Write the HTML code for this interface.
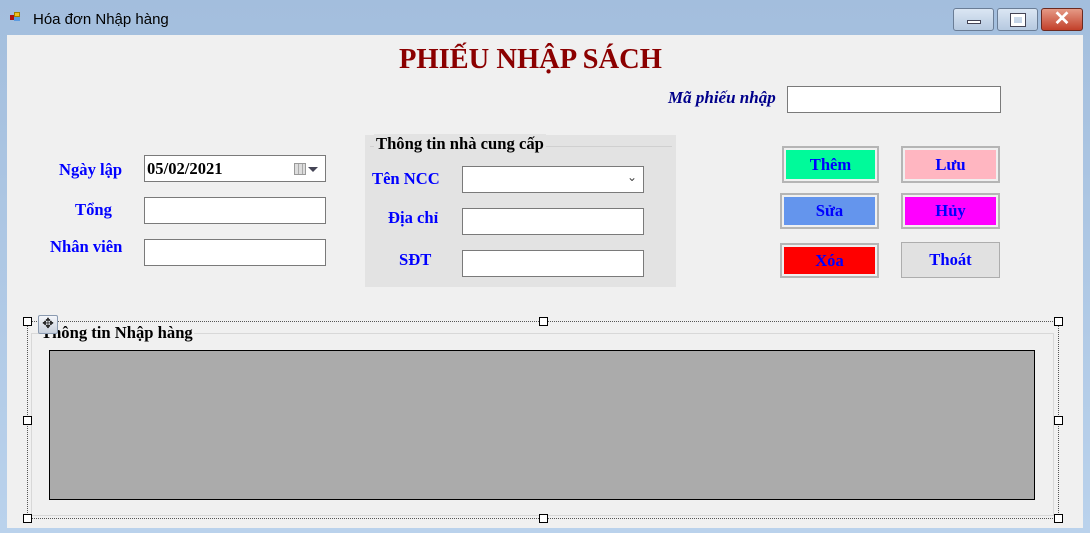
<!DOCTYPE html>
<html><head><meta charset="utf-8"><style>
*{margin:0;padding:0;box-sizing:border-box}
body{width:1090px;height:533px;overflow:hidden;background:linear-gradient(#a3bedd,#bad2ec);font-family:"Liberation Serif",serif;position:relative}
.a{position:absolute}
.lbl{position:absolute;font-weight:bold;font-size:16.6px;color:#0000ff;white-space:nowrap}
.in{position:absolute;background:#fff;border:1px solid #7a7a7a}
.btn{position:absolute;border:2px solid #b5b5b5;padding:2px}
.btn div{width:100%;height:100%;display:flex;align-items:center;justify-content:center;font-weight:bold;font-size:16.6px;color:#0000ff}
.h{position:absolute;width:9px;height:9px;background:#fff;border:1px solid #000}
</style></head><body>
<div class="a" style="left:10px;top:12px;width:9px;height:9px;">
<div class="a" style="left:0;top:3px;width:4px;height:5px;background:#b01010"></div>
<div class="a" style="left:4px;top:0;width:6px;height:5px;background:#f0c020;border:1px solid #a08000"></div>
<div class="a" style="left:4px;top:5px;width:6px;height:4px;background:#5a9ae0"></div>
</div>
<div class="a" style="left:33px;top:11px;font-family:'Liberation Sans',sans-serif;font-size:15px;color:#000">Hóa đơn Nhập hàng</div>
<div class="a" style="left:953px;top:8px;width:41px;height:23px;border:1px solid #6a7d96;border-radius:3px;background:linear-gradient(#dbe6f3,#b6c9e0)"><div class="a" style="left:13px;top:11px;width:14px;height:4px;background:#fff;border:1px solid #445"></div></div>
<div class="a" style="left:997px;top:8px;width:41px;height:23px;border:1px solid #6a7d96;border-radius:3px;background:linear-gradient(#dbe6f3,#b6c9e0)"><div class="a" style="left:13px;top:5px;width:14px;height:12px;border:3px solid #fff;outline:1px solid #445"></div></div>
<div class="a" style="left:1041px;top:8px;width:42px;height:23px;border:1px solid #6b2a20;border-radius:3px;background:linear-gradient(#e59a86,#c2402a);color:#fff;font:bold 20px 'Liberation Sans',sans-serif;text-align:center;line-height:21px">✕</div>
<div class="a" style="left:7px;top:35px;width:1076px;height:493px;background:#f0f0f0"></div>

<div class="a" style="left:399px;top:44px;font-size:28.5px;font-weight:bold;color:#8b0000;letter-spacing:0px;white-space:nowrap">PHIẾU NHẬP SÁCH</div>
<div class="a" style="left:668px;top:88px;font-size:17px;font-weight:bold;font-style:italic;color:#00008b">Mã phiếu nhập</div>
<div class="in" style="left:787px;top:86px;width:214px;height:27px"></div>

<div class="lbl" style="left:59px;top:160px">Ngày lập</div>
<div class="lbl" style="left:75px;top:200px">Tổng</div>
<div class="lbl" style="left:50px;top:237px">Nhân viên</div>
<div class="in" style="left:144px;top:155px;width:182px;height:27px"><span class="a" style="left:2px;top:3px;font-size:16.6px;font-weight:bold">05/02/2021</span>
<div class="a" style="left:149px;top:7px;width:12px;height:12px;border:1px solid #999;background:repeating-linear-gradient(90deg,#ddd 0 3px,#aaa 3px 4px)"></div>
<div class="a" style="left:163px;top:11px;border-left:5px solid transparent;border-right:5px solid transparent;border-top:5px solid #445"></div></div>
<div class="in" style="left:144px;top:197px;width:182px;height:27px"></div>
<div class="in" style="left:144px;top:239px;width:182px;height:27px"></div>

<div class="a" style="left:365px;top:135px;width:311px;height:152px;background:#e3e3e3"></div>
<div class="a" style="left:370px;top:146px;width:302px;height:1px;background:#d0d0d0"></div>
<div class="a" style="left:374px;top:134px;font-size:16.6px;font-weight:bold;background:#e3e3e3;padding:0 2px">Thông tin nhà cung cấp</div>
<div class="lbl" style="left:372px;top:169px">Tên NCC</div>
<div class="lbl" style="left:388px;top:208px">Địa chỉ</div>
<div class="lbl" style="left:399px;top:250px">SĐT</div>
<div class="in" style="left:462px;top:166px;width:182px;height:27px"><span class="a" style="left:164px;top:3px;font:12px 'DejaVu Sans',sans-serif;color:#444">⌄</span></div>
<div class="in" style="left:462px;top:208px;width:182px;height:27px"></div>
<div class="in" style="left:462px;top:250px;width:182px;height:27px"></div>

<div class="btn" style="left:782px;top:146px;width:97px;height:37px"><div style="background:#00fa9a">Thêm</div></div>
<div class="btn" style="left:901px;top:146px;width:99px;height:37px"><div style="background:#ffb6c1">Lưu</div></div>
<div class="btn" style="left:780px;top:193px;width:99px;height:36px"><div style="background:#6495ed">Sửa</div></div>
<div class="btn" style="left:901px;top:193px;width:99px;height:36px"><div style="background:#ff00ff">Hủy</div></div>
<div class="btn" style="left:780px;top:243px;width:99px;height:35px"><div style="background:#ff0000">Xóa</div></div>
<div class="a" style="left:901px;top:242px;width:99px;height:36px;border:1px solid #adadad;background:#e1e1e1;display:flex;align-items:center;justify-content:center;font-weight:bold;font-size:16.6px;color:#0000ff">Thoát</div>

<div class="a" style="left:27px;top:321px;width:1032px;height:198px;border:1px dotted #555"></div>
<div class="a" style="left:31px;top:333px;width:1023px;height:183px;border:1px solid #d8d8d8"></div>
<div class="a" style="left:40px;top:323px;font-size:16.6px;font-weight:bold;background:#f0f0f0;padding:0 1px">Thông tin Nhập hàng</div>
<div class="a" style="left:38px;top:315px;width:20px;height:19px;border:1px solid #8a9ab0;border-radius:2px;background:linear-gradient(#f4f6fa,#c8d0dc);text-align:center;font:14px 'DejaVu Sans',sans-serif;line-height:17px;color:#222">✥</div>
<div class="a" style="left:49px;top:350px;width:986px;height:150px;background:#ababab;border:1px solid #000"></div>
<div class="h" style="left:23px;top:317px"></div>
<div class="h" style="left:539px;top:317px"></div>
<div class="h" style="left:1054px;top:317px"></div>
<div class="h" style="left:23px;top:416px"></div>
<div class="h" style="left:1054px;top:416px"></div>
<div class="h" style="left:23px;top:514px"></div>
<div class="h" style="left:539px;top:514px"></div>
<div class="h" style="left:1054px;top:514px"></div>
</body></html>
